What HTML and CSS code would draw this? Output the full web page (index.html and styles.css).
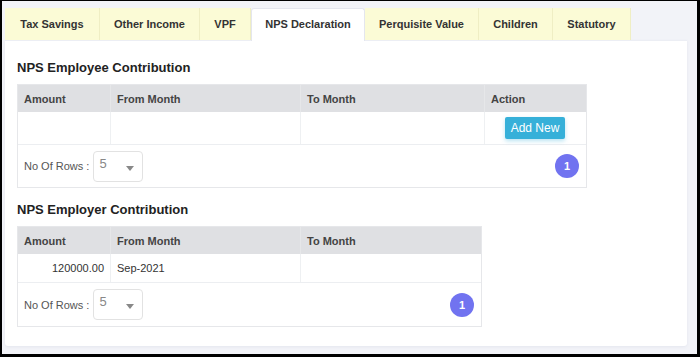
FILE: index.html
```html
<!DOCTYPE html>
<html lang="en">
<head>
    <meta charset="UTF-8">
    <title>NPS Declaration</title>
    <link rel="stylesheet" href="styles.css">
</head>
<body>
    <div class="frame">
        <!-- tabs -->
        <ul class="tabs">
            <li class="tab">Tax Savings</li>
            <li class="tab">Other Income</li>
            <li class="tab">VPF</li>
            <li class="tab active">NPS Declaration</li>
            <li class="tab">Perquisite Value</li>
            <li class="tab">Children</li>
            <li class="tab">Statutory</li>
        </ul>

        <div class="card">
            <h3 class="section-title">NPS Employee Contribution</h3>
            <div class="grid grid-wide">
                <div class="row head">
                    <div class="cell c-amount">Amount</div>
                    <div class="cell c-from">From Month</div>
                    <div class="cell c-to">To Month</div>
                    <div class="cell c-action">Action</div>
                </div>
                <div class="row body-row tall">
                    <div class="cell c-amount"></div>
                    <div class="cell c-from"></div>
                    <div class="cell c-to"></div>
                    <div class="cell c-action"><button class="btn-add">Add New</button></div>
                </div>
                <div class="pager">
                    <span class="pager-label">No Of Rows :</span>
                    <div class="select">5<span class="caret"></span></div>
                    <span class="page-badge">1</span>
                </div>
            </div>

            <h3 class="section-title second">NPS Employer Contribution</h3>
            <div class="grid grid-narrow">
                <div class="row head">
                    <div class="cell c-amount">Amount</div>
                    <div class="cell c-from">From Month</div>
                    <div class="cell c-to">To Month</div>
                </div>
                <div class="row body-row">
                    <div class="cell c-amount num">120000.00</div>
                    <div class="cell c-from">Sep-2021</div>
                    <div class="cell c-to"></div>
                </div>
                <div class="pager">
                    <span class="pager-label">No Of Rows :</span>
                    <div class="select">5<span class="caret"></span></div>
                    <span class="page-badge">1</span>
                </div>
            </div>
        </div>
    </div>
</body>
</html>
```

FILE: styles.css
```css
/* base */
* {
    margin: 0;
    padding: 0;
    box-sizing: border-box;
}

body {
    font-family: 'Liberation Sans', Arial, sans-serif;
    font-size: 11px;
    color: #333;
    background: #000;
    width: 700px;
    height: 357px;
    overflow: hidden;
}

/* screenshot frame */
.frame {
    margin: 1px 3px 3px 2px;
    height: 353px;
    background: #f2f3f8;
    padding: 7px 10px 0 3px;
}

/* tabs */
.tabs {
    list-style: none;
    display: flex;
    height: 32px;
    position: relative;
    z-index: 1;
}

.tab {
    height: 32px;
    line-height: 32px;
    text-align: center;
    white-space: nowrap;
    background: #fbfbd6;
    border-right: 1px solid #efeec4;
    font-weight: bold;
    color: #333;
}

.tab:nth-child(1) { width: 95px; }
.tab:nth-child(2) { width: 100px; }
.tab:nth-child(3) { width: 51px; }
.tab:nth-child(4) { width: 114px; }
.tab:nth-child(5) { width: 114px; }
.tab:nth-child(6) { width: 74px; }
.tab:nth-child(7) { width: 78px; }

.tab.active {
    background: #fff;
    border: 1px solid #e4e6ee;
    border-bottom: none;
    border-radius: 3px 3px 0 0;
    line-height: 30px;
    height: 33px;
}

/* card */
.card {
    background: #fff;
    width: 682px;
    height: 306px;
    padding: 19px 12px 0 12px;
    border-top: 1px solid #eceef4;
    border-radius: 0 0 3px 3px;
    box-shadow: 0 1px 3px rgba(80, 90, 130, 0.08);
}

.section-title {
    font-size: 13px;
    font-weight: bold;
    color: #222;
    height: 24px;
}

.section-title.second {
    margin-top: 14px;
    height: 24px;
}

/* tables */
.grid {
    border: 1px solid #e6e7ea;
}

.grid-wide { width: 570px; }
.grid-narrow { width: 465px; }

.row {
    display: flex;
}

.row.head {
    background: #dfe0e3;
    height: 27px;
    font-weight: bold;
    color: #444;
}

.head .cell + .cell {
    border-left: 1px solid #e6e7e9;
}

.body-row {
    height: 29px;
    border-bottom: 1px solid #eceef1;
}

.body-row.tall {
    height: 33px;
}

.cell {
    padding: 0 6px;
    display: flex;
    align-items: center;
}

.body-row .cell + .cell {
    border-left: 1px solid #eef0f2;
}

.c-amount { width: 92px; }
.c-from { width: 190px; }
.c-to { width: 184px; }
.c-action { width: 102px; }

.grid-narrow .c-to { width: 181px; }

.num {
    justify-content: flex-end;
}

.btn-add {
    margin-left: 14px;
    background: #36b0d9;
    color: #fff;
    border: none;
    border-radius: 2px;
    font-family: inherit;
    font-size: 12px;
    height: 22px;
    width: 60px;
    box-shadow: 0 2px 4px rgba(54, 176, 217, 0.35);
}

/* pager row */
.pager {
    display: flex;
    align-items: center;
    height: 42px;
    padding: 0 6px;
}

.grid-narrow .pager {
    height: 43px;
}

.pager-label {
    color: #555;
    margin-right: 4px;
}

.select {
    width: 50px;
    height: 31px;
    border: 1px solid #e2e2e2;
    border-radius: 4px;
    padding: 4px 0 0 5px;
    color: #888;
    font-size: 13px;
    position: relative;
}

.caret {
    position: absolute;
    right: 8px;
    top: 14px;
    border-left: 4px solid transparent;
    border-right: 4px solid transparent;
    border-top: 5px solid #888;
}

.page-badge {
    margin-left: auto;
    width: 24px;
    height: 24px;
    border-radius: 50%;
    background: #7173f0;
    color: #fff;
    font-size: 11px;
    font-weight: bold;
    display: flex;
    align-items: center;
    justify-content: center;
    margin-right: 1px;
}
```
